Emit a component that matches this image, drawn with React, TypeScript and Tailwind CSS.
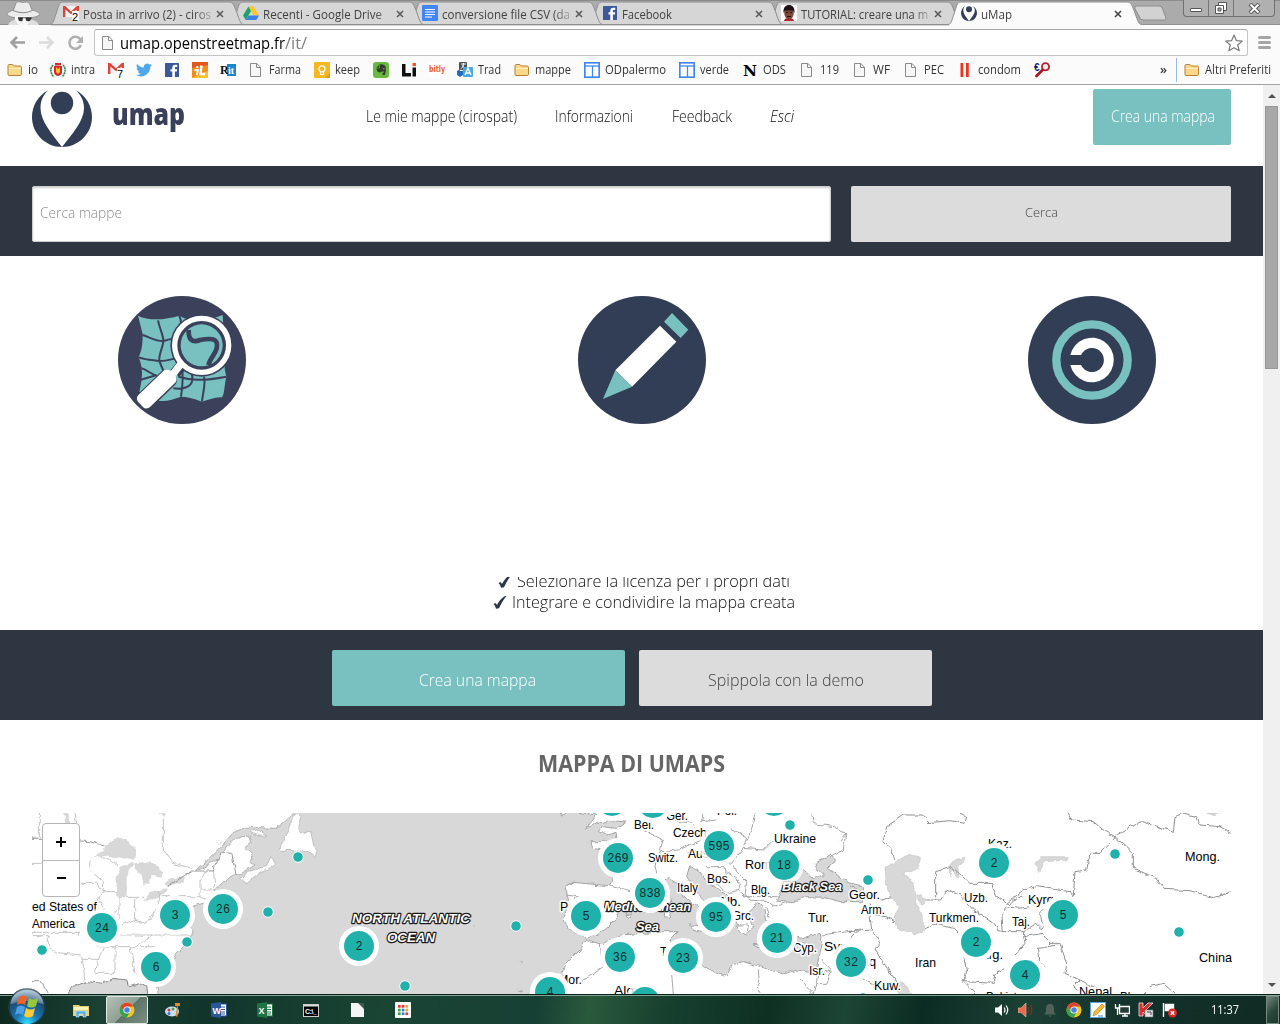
import React, { useLayoutEffect, useRef, useState } from "react";

/* Text squeezed or stretched horizontally to a given width. */
function Fit({ w, className = "", children }: { w: number; className?: string; children: React.ReactNode }) {
  const ref = useRef<HTMLSpanElement>(null);
  const [scale, setScale] = useState(1);
  useLayoutEffect(() => {
    const el = ref.current;
    if (el && el.offsetWidth) setScale(w / el.getBoundingClientRect().width * scale);
  }, [w]);
  return (
    <span className={"inline-block whitespace-nowrap text-left " + className} style={{ width: w }}>
      <span ref={ref} className="inline-block origin-left" style={{ transform: `scaleX(${scale})` }}>
        {children}
      </span>
    </span>
  );
}

/* ---------- small icons ---------- */
const Svg = ({ children, s = 16, vb = "0 0 16 16" }: any) => (
  <svg width={s} height={s} viewBox={vb} className="block shrink-0">{children}</svg>
);
const Gmail = ({ n }: { n: string }) => (
  <Svg>
    <rect x="0" y="1" width="16" height="11" fill="#f4f4f4" />
    <path d="M0 12V1h2.200L8 6.400 13.800 1H16v11h-2.400V4.500L8 9.300 2.400 4.500V12z" fill="#db4437" />
    <rect x="9" y="6" width="7" height="10" fill="#fff" />
    <text x="9" y="15.500" fontSize="11" fontFamily="Liberation Sans" fill="#000">{n}</text>
  </Svg>
);
const Drive = () => (
  <Svg>
    <path d="M5.400 1.500h5.200L16 10.500h-5.300z" fill="#fbc62c" />
    <path d="M5.400 1.500L8 6 2.700 15 0 10.500z" fill="#1da462" />
    <path d="M5.300 10.500H16L13.400 15H2.700z" fill="#3f7fe8" />
  </Svg>
);
const Docs = () => (
  <Svg><rect width="16" height="16" rx="1" fill="#4285f4" /><path d="M3 4.500h10M3 7h10M3 9.500h10M3 12h7" stroke="#fff" strokeWidth="1.200" /></Svg>
);
const Fb = () => (
  <Svg><rect x="1" y="1" width="14" height="14" rx=".5" fill="#3b5998" /><path d="M8.300 15V9.500H6.500V7.200h1.800V5.700c0-1.900 1.100-2.900 2.900-2.900h2v2.300h-1.300c-.8 0-1 .4-1 1v1.100h2.300l-.3 2.300h-2V15z" fill="#fff" /></Svg>
);
const Face = () => (
  <Svg><rect width="16" height="16" fill="#fff" /><path d="M3 16c0-2 2-3 5-3s5 1 5 3z" fill="#b2262c" /><ellipse cx="8" cy="8" rx="4.800" ry="6.500" fill="#7d4638" /><path d="M2.500 8C2 2 5 0 8 0s6 2 5.500 8L12 5.500H4z" fill="#1d1213" /><path d="M5 7.500h2M9 7.500h2M6 11.500h4" stroke="#2a1414" /></Svg>
);
const UMapLogo = ({ s = 16 }: { s?: number }) => (
  <svg width={s} height={s} viewBox="0 0 60 60" className="block shrink-0">
    <path d="M16 3.500C6 8.500 0 19 0 30c0 16.500 13.500 30 30 30C20 47 8.500 34 8.500 21 8.500 14 11 8 16 3.500zM44 3.500C54 8.500 60 19 60 30c0 16.500-13.500 30-30 30C40 47 52 34 52 21 52 14 49 8 44 3.500z" fill="#323e56" />
    <circle cx="30" cy="16" r="11.200" fill="#323e56" />
  </svg>
);
const Folder = () => (
  <Svg><path d="M1 4c0-1 .3-1.500 1.200-1.500h3.600L7.300 4H13c1 0 1.500.5 1.500 1.500V12c0 1-.5 1.500-1.500 1.500H2C1.300 13.500 1 13 1 12z" fill="#fbd888" stroke="#b67f3b" /><path d="M2 6h12v1H2z" fill="#fff0c0" /></Svg>
);
const Page = () => (
  <Svg><path d="M2.500 1.500h6.300l3.700 3.700v9.300h-10z" fill="#f7f7f7" stroke="#8a8a8a" /><path d="M8.500 1.500v4h4" fill="none" stroke="#8a8a8a" /></Svg>
);
const Crest = () => (
  <Svg><path d="M3 3C0 6 0 11 4 15M13 3c3 3 3 8-1 12" stroke="#3f8a50" strokeWidth="1.700" fill="none" strokeDasharray="2 .6" /><path d="M4 4h8v6q0 3-4 4-4-1-4-4z" fill="#d8262c" /><path d="M6 5l2 2 2-2v5l-2 2-2-2z" fill="#f0c531" /><path d="M5 1h6v2.500H5z" fill="#c93232" /></Svg>
);
const Twitter = () => (
  <Svg vb="0 0 24 24"><path d="M24 4.600a10 10 0 0 1-2.800.8 5 5 0 0 0 2.100-2.700 10 10 0 0 1-3.100 1.200 4.900 4.900 0 0 0-8.400 4.500A14 14 0 0 1 1.700 3.100a4.900 4.900 0 0 0 1.500 6.600 5 5 0 0 1-2.200-.6c0 2.400 1.700 4.400 3.900 4.900a5 5 0 0 1-2.200.1 4.900 4.900 0 0 0 4.600 3.400A10 10 0 0 1 0 19.500a14 14 0 0 0 7.500 2.200c9.100 0 14.300-7.700 14-14.600A10 10 0 0 0 24 4.600z" fill="#4ea7e8" /></Svg>
);
const BoxText = ({ bg, fg, t, size = 12, font = "Liberation Sans", w = 14, y = 12.500 }: any) => (
  <Svg><rect width="16" height="16" fill={bg} /><text x="1" y={y} fontSize={size} fontWeight="bold" fontFamily={font} fill={fg} textLength={w} lengthAdjust="spacingAndGlyphs">{t}</text></Svg>
);
const IL = () => (
  <Svg><rect width="16" height="16" fill="#f28c1e" /><path d="M0 16L16 9v7z" fill="#f9c22f" /><path d="M0 0h16v3L0 6z" fill="#e2571f" /><path d="M2.500 8h3.300l-.8 5M5.300 4v2" stroke="#fff" strokeWidth="2" fill="none" /><path d="M9.500 3.500L8.500 12H13" stroke="#fff" strokeWidth="2.400" fill="none" /></Svg>
);
const Rit = () => (
  <Svg><rect width="16" height="16" fill="#fff" /><rect x="7" y="2" width="9" height="12" fill="#1787c9" /><text x="0" y="12" fontSize="12" fontWeight="bold" fontFamily="Liberation Serif" fill="#111">R</text><text x="8" y="12" fontSize="10" fontWeight="bold" fontFamily="Liberation Serif" fill="#fff">it</text></Svg>
);
const Keep = () => (
  <Svg><rect width="16" height="16" rx="1" fill="#f4b823" /><path d="M11 16l5-5v5z" fill="#d99b16" /><circle cx="8" cy="6.800" r="3" fill="none" stroke="#fff" strokeWidth="1.300" /><path d="M6.500 10v2.500h3V10" fill="none" stroke="#fff" strokeWidth="1.200" /></Svg>
);
const Ever = () => (
  <Svg><rect width="16" height="16" rx="3" fill="#69b83f" /><path d="M3.500 5.500L6.500 2.500C9 2 11.500 2.500 12.500 4.500c.6 3 .3 6.500-.7 8.500H9.500v-2.200l1.500-.2-.1-1-2.900.1-.6.800C4.500 10.600 3.500 9 3.500 5.500z" fill="#343a30" /><path d="M3.500 6h3V3" stroke="#69b83f" strokeWidth=".7" fill="none" /><circle cx="10.700" cy="6.800" r=".8" fill="#69b83f" /></Svg>
);
const Li = () => (
  <Svg><path d="M1 2h3.500v9H10v3.500H1z" fill="#111" /><path d="M11.500 5.500H15v9h-3.500z" fill="#111" /><path d="M11.500 1H15v3.200h-3.500z" fill="#ef5a28" /></Svg>
);
const Bitly = () => (
  <Svg><rect width="16" height="16" fill="#fff" /><text x="0" y="10" fontSize="8" fontWeight="bold" fontFamily="DejaVu Sans" fill="#ee6123" textLength="16" lengthAdjust="spacingAndGlyphs">bitly</text></Svg>
);
const Trad = () => (
  <Svg><rect x="2" y="0" width="8" height="8" rx="1" fill="#4a5157" /><path d="M4 2h5M6.500 1v1.500C6 5 5 6 3.500 7M5 3.500L9 7" stroke="#fff" fill="none" /><rect x="6" y="5" width="10" height="10" rx="1" fill="#4aa8dc" /><path d="M8 13l3-7 3 7M9 11h4" stroke="#fff" strokeWidth="1.300" fill="none" /><path d="M0 9l3-2v2h3v4l-3 2-3-2z" fill="#1c6fbf" /></Svg>
);
const TIcon = () => (
  <Svg><rect x=".8" y=".8" width="14.400" height="14.400" fill="#fff" stroke="#4285f4" strokeWidth="1.700" /><path d="M1 4h14" stroke="#4285f4" strokeWidth="1.300" /><path d="M8.500 4v11" stroke="#4285f4" strokeWidth="1.300" /></Svg>
);
const Bars = () => <Svg><path d="M3.500 1h2.800v14H3.500zM9 1h2.800v14H9z" fill="#ea3323" /></Svg>;
const EuroLens = () => (
  <Svg><rect y="1" width="16" height="15" fill="#fff" /><text x="0" y="9" fontSize="10" fontWeight="bold" fontFamily="Liberation Sans" fill="#171a6d">€</text><circle cx="11.500" cy="4.800" r="3.600" fill="#eee" stroke="#b5202c" strokeWidth="1.800" /><path d="M8.500 8l-6 6" stroke="#a11d28" strokeWidth="2.800" strokeLinecap="round" /></Svg>
);
const Chrome = () => (
  <Svg><circle cx="8" cy="8" r="7.500" fill="#f5c51c" /><path d="M1.500 4.300A7.500 7.500 0 0 1 14.500 4.500H8L5 10z" fill="#dc4132" /><path d="M1.500 4.300A7.500 7.500 0 0 0 7.700 15.500L11 10H5z" fill="#34a350" /><circle cx="8" cy="8" r="3.600" fill="#fff" /><circle cx="8" cy="8" r="2.800" fill="#4583ec" /></Svg>
);

/* ---------- browser chrome ---------- */
const CloseX = ({ dark }: { dark?: boolean }) => (
  <svg width="8" height="8" viewBox="0 0 8 8" className="block shrink-0"><path d="M1 1l6 6M7 1L1 7" stroke={dark ? "#444" : "#5a5a5a"} strokeWidth="1.600" /></svg>
);
const TABS = [
  { icon: <Gmail n="2" />, t: "Posta in arrivo (2) - ciros", w: 128, z: "z-[6]" },
  { icon: <Drive />, t: "Recenti - Google Drive", w: 119, z: "z-[5]" },
  { icon: <Docs />, t: "conversione file CSV (da", w: 128, z: "z-[4]" },
  { icon: <Fb />, t: "Facebook", w: 50, z: "z-[3]" },
  { icon: <Face />, t: "TUTORIAL: creare una m", w: 127, z: "z-[2]" },
  { icon: <UMapLogo />, t: "uMap", w: 31, z: "z-[7]", active: true },
];

function TabStrip() {
  return (
    <div className="relative flex h-[25px] border-t border-[#8c8c8c] bg-[#ababab] shadow-[inset_0_-1px_0_#909090]">
      <svg width="51" height="24" viewBox="0 0 51 24" className="shrink-0">
        <path d="M8 24c1-3 5-5 9-6h13c4 1 8 3 9 6z" fill="#dedede" />
        <path d="M13.500 9L16 2c1.500-2 4-1 6.500-.5C25 1 28 .5 29.500 2.500L32 9c4 1 8 3 8 4.500-3 2.500-7 3-9 3H15c-3 0-6-1-8-3 0-1.500 3-3.500 6.500-4.500z" fill="#ebebeb" stroke="#858585" strokeWidth=".8" />
        <path d="M13 9.500q10 4.500 19.500 0" stroke="#888" fill="none" />
        <path d="M15 15h16v4l-4 5h-8l-4-5z" fill="#f7f7f7" /><path d="M18 16.500h5l-.5 3.500q-3 1-4-1zM25.500 16.500h6.500l-2 3.500q-3 .5-4-.5z" fill="#333" />
        <path d="M18 16.700h13" stroke="#333" strokeWidth=".8" />
      </svg>
      {TABS.map((t) => (
        <div key={t.t} className={"relative h-6 w-[179.600px] shrink-0 " + t.z}>
          <svg width="198" height="25" viewBox="0 0 198 25" className="absolute left-0 top-0">
            <path d="M-1 23.500C2 23.500 2.500 20 5 13 8 4 8 1 12 1H178c4 0 5 3 8 11 3 9 4 11.500 7 11.500v2H-1z" fill={t.active ? "#fbfbfb" : "#d6d6d6"} />
            <path d="M-1 23.500C2 23.500 2.500 20 5 13 8 4 8 1 12 1H178c4 0 5 3 8 11 3 9 4 11.500 7 11.500" fill="none" stroke="#8e8e8e" />
            {!t.active && <path d="M-2 23.500H193" stroke="#919191" />}
          </svg>
          <div className="relative flex h-6 items-center pl-3">
            {t.icon}
            <div className="ml-1 w-[129px] overflow-hidden [mask-image:linear-gradient(to_right,#000_86%,rgba(0,0,0,0.250))]">
              <Fit w={t.w} className="text-[12px] text-[#404040]">{t.t}</Fit>
            </div>
            <div className="ml-[4px] pt-px"><CloseX dark={t.active} /></div>
          </div>
        </div>
      ))}
      <svg width="34" height="20" viewBox="0 0 34 20" className="ml-[5px] mt-px shrink-0"><path d="M1 4h23c3 0 4 1 5 4l3 8c0 2-1 2-2 2H10c-3 0-4-1-5-4L1 7z" fill="#d2d2d2" stroke="#8d8d8d" /></svg>
      <div className="absolute right-[5px] top-[-1px] z-10 flex h-[17px] w-[92px] overflow-hidden rounded-b-[4px] border border-t-0 border-[#707070] bg-[#b0b0b0]">
        <div className="flex w-[25px] items-center justify-center border-r border-[#777] pt-1"><span className="block h-[4px] w-[12px] rounded-[1px] border border-[#555] bg-white" /></div>
        <div className="flex w-[25px] items-center justify-center border-r border-[#777]">
          <svg width="14" height="14" viewBox="0 0 14 14"><path d="M4.500 1.500h8v8h-8z" fill="#fff" stroke="#555" /><path d="M1.500 4.500h8v8h-8z" fill="#fff" stroke="#555" /><path d="M4 7h3v3H4z" fill="#aaa" stroke="#555" /></svg>
        </div>
        <div className="flex flex-1 items-center justify-center">
          <svg width="13" height="11" viewBox="0 0 13 11"><path d="M2 1l9 9M11 1l-9 9" stroke="#555" strokeWidth="4" /><path d="M2.500 1.500l8 8M10.500 1.500l-8 8" stroke="#fff" strokeWidth="2" /></svg>
        </div>
      </div>
    </div>
  );
}

function Toolbar() {
  return (
    <div className="flex h-[31px] items-center bg-[#fbfbfb] pt-[4px]">
      <svg width="94" height="24" viewBox="0 0 94 24" className="shrink-0" fill="none" strokeWidth="2.600">
        <path d="M25 11.500H12M17 6L11.500 11.500l5.500 5.500" stroke="#a0a0a0" />
        <path d="M39 11.500h13M47 6l5.500 5.500-5.500 5.500" stroke="#dcdcdc" />
        <path d="M80.500 8.500A6 6 0 1 0 81 14" stroke="#b0b0b0" />
        <path d="M83 5v7h-7z" fill="#b0b0b0" />
      </svg>
      <div className="flex h-[27px] w-[1154px] items-center rounded-[3px] border border-[#c4c4c4] border-t-[#a6a6a6] bg-white pl-[5px] pr-[3px]">
        <Page />
        <div className="ml-[4px] flex text-[16px] leading-[24px]">
          <Fit w={165} className="text-black">umap.openstreetmap.fr</Fit>
          <Fit w={22} className="text-[#808080]">/it/</Fit>
        </div>
        <svg width="20" height="20" viewBox="0 0 20 20" className="ml-auto"><path d="M10 2l2.300 5.600 6 .5-4.600 3.900 1.500 5.800L10 14.700 4.800 17.800 6.300 12 1.700 8.100l6-.5z" fill="#fff" stroke="#7b7b7b" strokeWidth="1.200" strokeLinejoin="round" /></svg>
      </div>
      <div className="ml-[10px] flex w-[13px] flex-col gap-[2px]">
        <span className="h-[3px] rounded bg-[#a5a5a5]" /><span className="h-[3px] rounded bg-[#a5a5a5]" /><span className="h-[3px] rounded bg-[#a5a5a5]" />
      </div>
    </div>
  );
}

const MARKS: { x: number; icon: React.ReactNode; t?: string; w?: number }[] = [
  { x: 7, icon: <Folder />, t: "io", w: 10 },
  { x: 50, icon: <Crest />, t: "intra", w: 24 },
  { x: 108, icon: <Gmail n="7" /> },
  { x: 136, icon: <Twitter /> },
  { x: 164, icon: <Fb /> },
  { x: 192, icon: <IL /> },
  { x: 220, icon: <Rit /> },
  { x: 248, icon: <Page />, t: "Farma", w: 32 },
  { x: 314, icon: <Keep />, t: "keep", w: 25 },
  { x: 373, icon: <Ever /> },
  { x: 401, icon: <Li /> },
  { x: 429, icon: <Bitly /> },
  { x: 457, icon: <Trad />, t: "Trad", w: 23 },
  { x: 514, icon: <Folder />, t: "mappe", w: 36 },
  { x: 584, icon: <TIcon />, t: "ODpalermo", w: 61 },
  { x: 679, icon: <TIcon />, t: "verde", w: 29 },
  { x: 742, icon: <BoxText bg="#fff" fg="#000" t="N" size={15} font="DejaVu Serif" w={14} y={13.500} />, t: "ODS", w: 23 },
  { x: 799, icon: <Page />, t: "119", w: 19 },
  { x: 852, icon: <Page />, t: "WF", w: 17 },
  { x: 903, icon: <Page />, t: "PEC", w: 20 },
  { x: 957, icon: <Bars />, t: "condom", w: 43 },
  { x: 1034, icon: <EuroLens /> },
];

function Bookmarks() {
  return (
    <div className="flex h-[29px] items-center border-b border-[#a3a3a3] bg-[#fbfbfb] pl-[7px] text-[12px] text-[#333]">
      {MARKS.map((m, i) => (
        <div key={m.x} className="flex shrink-0 items-center gap-[5px]" style={{ width: (MARKS[i + 1]?.x ?? 1160) - m.x }}>
          {m.icon}
          {m.t && <Fit w={m.w!}>{m.t}</Fit>}
        </div>
      ))}
      <Fit w={7} className="font-semibold">»</Fit>
      <div className="ml-[9px] mr-[7px] h-6 w-px bg-[#9db5e8]" />
      <Folder />
      <Fit w={66} className="ml-[5px]">Altri Preferiti</Fit>
    </div>
  );
}

/* ---------- page ---------- */
function Header() {
  return (
    <header className="flex h-[81px] items-start pl-8 pr-8">
      <div className="h-[62px] pt-[2px]"><UMapLogo s={60} /></div>
      <Fit w={73} className="ml-5 mt-[9px] text-[30px] font-extrabold leading-[40px] text-[#3a4059]">umap</Fit>
      <nav className="ml-[181px] mt-[18px] flex text-[17px] font-light leading-[25px] text-[#111]">
        <Fit w={151}>Le mie mappe (cirospat)</Fit>
        <Fit w={78} className="ml-[38px]">Informazioni</Fit>
        <Fit w={60} className="ml-[39px]">Feedback</Fit>
        <Fit w={24} className="ml-[38px] italic">Esci</Fit>
      </nav>
      <button className="ml-auto mt-[4px] h-14 w-[138px] rounded-[2px] bg-[#79c0c0] pb-[3px] pl-[2px] text-[17px] font-light text-white">
        <Fit w={104}>Crea una mappa</Fit>
      </button>
    </header>
  );
}

function Search() {
  return (
    <div className="flex h-[90px] gap-5 bg-[#2e3641] px-8 pt-5">
      <div className="h-14 w-[799px] rounded-[2px] border border-[#ccc] bg-white pl-[7px] pt-[14px] text-[14.500px] font-light leading-[23px] text-[#8c8c8c] shadow-[inset_0_1px_2px_#ccc]">
        <Fit w={82}>Cerca mappe</Fit>
      </div>
      <button className="h-14 w-[380px] rounded-[2px] bg-[#dcdcdc] pb-[2px] text-[13px] font-light text-[#444]">
        <Fit w={33}>Cerca</Fit>
      </button>
    </div>
  );
}

function Features() {
  return (
    <div className="flex h-[321px] pl-[118px] pt-10">
      <svg width="128" height="128" viewBox="54 48 384 384">
        <circle cx="246" cy="240" r="192" fill="#3b415a" />
        <path d="M114 107C150 125 200 118 238 107C270 128 330 122 368 105C372 150 366 200 376 240C370 265 378 280 379 290C372 320 374 340 366 352C345 350 325 360 306 365C280 355 260 350 243 350C220 358 200 365 175 362L118 335C130 290 128 260 116 232C126 210 128 190 128 162z" fill="#79c0c0" />
        <path d="M174 121C180 150 190 165 190 183C190 200 176 220 178 243M238 107C246 125 244 150 240 170M128 165C150 172 170 185 190 183C205 180 220 172 235 174M116 232C140 240 160 240 178 243C195 245 220 235 235 234M120 263C150 272 150 285 185 292M120 300L170 285M178 243L195 285M243 350C246 330 252 290 245 262M306 365C308 340 318 310 312 290M235 290C270 300 300 305 379 290M220 325C250 330 275 320 277 300C280 275 260 265 250 270" fill="none" stroke="#3b415a" strokeWidth="6" />
        <circle cx="305" cy="196" r="94" fill="#3b415a" />
        <path d="M255 245L225 280" stroke="#3b415a" strokeWidth="34" />
        <rect x="-65" y="-29" width="130" height="58" rx="18" transform="translate(171 327) rotate(-44)" fill="#3b415a" />
        <circle cx="305" cy="196" r="81" fill="#3b415a" stroke="#fff" strokeWidth="16" />
        <circle cx="305" cy="196" r="63" fill="#79c0c0" />
        <path d="M266 150C265 178 276 190 300 180C345 172 355 180 350 205C345 225 330 235 325 255" fill="none" stroke="#3b415a" strokeWidth="14" />
        <path d="M242 253L215 287" stroke="#fff" strokeWidth="22" />
        <rect x="-67" y="-25" width="134" height="50" rx="15" transform="translate(170 327) rotate(-44)" fill="#fff" />
      </svg>
      <svg width="128" height="128" viewBox="54 48 384 384" className="ml-[332px]">
        <circle cx="246" cy="240" r="192" fill="#323e56" />
        <path d="M300 137L349 185L216 320L166 271z" fill="#fff" />
        <path d="M166 271L216 320L129 357zM336 99L385 149L362 174L312 125z" fill="#79c0c0" />
      </svg>
      <svg width="128" height="128" viewBox="54 48 384 384" className="ml-[322px]">
        <circle cx="246" cy="240" r="192" fill="#323e56" />
        <circle cx="246" cy="240" r="107" fill="none" stroke="#79c0c0" strokeWidth="25" />
        <path d="M181 225A66 67 0 1 1 181 255H213A36 36 0 1 0 213 225z" fill="#fff" />
      </svg>
    </div>
  );
}

const Check = () => (
  <svg width="14" height="13" viewBox="0 0 14 13" className="mr-[5px] inline-block shrink-0"><path d="M.5 8c1.200-1.200 2.800-1 3.500 1C5.500 6 8.500 2 11.500.3L13.500 0C10.500 3.500 8 8 6 12.300L3 12.700C2.500 11 1.800 9 .5 8z" fill="#2d3547" /></svg>
);

function Steps() {
  return (
    <ul className="flex h-[53px] flex-col items-center overflow-hidden text-[16px] font-light leading-[21px] text-[#111]">
      <li className="ml-[24px] mt-[-6px] flex h-[21px] shrink-0 items-center"><Check /><Fit w={273}>Selezionare la licenza per i propri dati</Fit></li>
      <li className="ml-[24px] flex h-[21px] shrink-0 items-center"><Check /><Fit w={283}>Integrare e condividire la mappa creata</Fit></li>
    </ul>
  );
}

/* ---------- map ---------- */
const CLUSTERS: [number, number, string, number][] = [
  [102, 928, "24", 0.6], [175, 915, "3", 1], [223, 909, "26", 1], [359, 946, "2", 1], [156, 967, "6", 1],
  [618, 858, "269", 1], [719, 846, "595", 0.8], [784, 865, "18", 0.8], [650, 893, "838", 1], [586, 916, "5", 1],
  [716, 917, "95", 1], [777, 938, "21", 1], [620, 957, "36", 0.9], [683, 958, "23", 1], [550, 992, "4", 1],
  [645, 1002, "", 0.8], [851, 962, "32", 0.9], [612, 801, "", 1], [653, 803, "", 1], [774, 801, "", 0.8],
  [994, 863, "2", 1], [1063, 915, "5", 1], [976, 942, "2", 1], [1025, 975, "4", 1],
];
const DOTS: [number, number][] = [
  [298, 857], [268, 912], [187, 942], [42, 950], [405, 986], [516, 926], [790, 825], [868, 880], [1115, 854], [1179, 932], [863, 998],
];
const LABELS: [number, number, number, string][] = [
  [32, 911, 65, "ed States of"], [32, 928, 43, "America"],
  [634, 829, 20, "Bel."], [666, 820, 22, "Ger."], [673, 837, 37, "Czech."], [717, 815, 20, "Pol."],
  [648, 862, 30, "Switz."], [688, 858, 24, "Aus."], [707, 883, 24, "Bos."], [677, 892, 21, "Italy"],
  [774, 843, 42, "Ukraine"], [745, 869, 30, "Rom."], [751, 894, 19, "Blg."], [718, 906, 23, "Alb."], [732, 920, 22, "Grc."],
  [808, 922, 21, "Tur."], [793, 952, 24, "Cyp."], [824, 951, 24, "Syr."], [809, 975, 16, "Isr."], [560, 911, 26, "Port."],
  [558, 984, 24, "Mor."], [614, 995, 24, "Alg."], [660, 956, 24, "Tun."], [849, 899, 31, "Geor."], [861, 914, 24, "Arm."],
  [854, 966, 22, "Iraq"], [874, 990, 27, "Kuw."], [915, 967, 21, "Iran"], [964, 902, 24, "Uzb."], [929, 922, 50, "Turkmen."],
  [988, 848, 24, "Kaz."], [1028, 904, 29, "Kyrg."], [1012, 926, 18, "Taj."], [980, 959, 23, "Afg."], [1079, 996, 33, "Nepal"],
  [986, 1001, 34, "Pakist."], [1120, 1001, 24, "Bhu."], [1185, 861, 35, "Mong."], [1199, 962, 33, "China"],
];
const SEAS: [number, number, number, string][] = [
  [352, 923, 118, "NORTH ATLANTIC"], [387, 942, 48, "OCEAN"], [604, 911, 87, "Mediterranean"], [636, 931, 23, "Sea"], [782, 891, 60, "Black Sea"],
];

function WorldMap() {
  return (
    <div className="relative ml-8 h-[181px] w-[1200px] overflow-hidden bg-white">
      <svg width="1200" height="181" viewBox="32 813 1200 181" className="block" fontFamily="Liberation Sans">
        <defs>
          <filter id="rough" x="0" y="0" width="100%" height="100%" filterUnits="objectBoundingBox">
            <feTurbulence type="fractalNoise" baseFrequency="0.14" numOctaves="2" seed="7" />
            <feDisplacementMap in="SourceGraphic" scale="5" xChannelSelector="R" yChannelSelector="G" />
          </filter>
        </defs>
        <g filter="url(#rough)" strokeLinejoin="round">
          <rect x="0" y="780" width="1300" height="260" fill="#fff" />
          <g transform="translate(0 800) scale(.33333)">
            <path d="M1300 20H900L860 60L830 85L740 82L705 95L670 135L630 175L583 212L610 205L655 175L690 130L710 112L748 108L752 125L735 143L760 165L750 185L765 195L725 220L700 225L680 240L650 262L640 280L610 310L580 318L585 340L565 370L578 400L560 430L530 460L510 510L500 540L470 560L478 600H1300z" fill="#d8d8d8" stroke="#b0b0b0" strokeWidth="3" />
            <path d="M878 50L892 40L903 50L893 80L905 102L932 92L940 135L952 150L945 172L925 155L838 150L850 122L868 90zM750 95L770 90L800 108L775 108zM722 236L740 215L800 200L812 170L828 190L790 215L740 250z" fill="#fff" stroke="#aaa" strokeWidth="2" />
            <path d="M445 600L440 560L425 550L385 560L380 540L340 535L310 550L260 545L220 560L190 600z" fill="#d8d8d8" stroke="#888" strokeWidth="3" />
            <path d="M275 175L320 140L345 115L380 120L410 150L405 180L370 172L345 178L320 165zM352 290L350 230L365 195L405 190L380 220L380 290zM405 190L430 185L460 190L490 215L485 230L455 225L450 250L430 255L425 225L400 205zM430 300L450 275L500 265L505 272L465 298zM490 250L510 235L555 232L550 245L505 258zM190 39H205L208 70L196 70zM480 39H505L490 55z" fill="#d8d8d8" />
            <g fill="none" stroke="#c4c4c4" strokeWidth="3">
              <path d="M118 39V110L95 113M95 190H125M225 39L230 70M240 250H290L312 280M305 275H350M300 170Q340 180 355 200M270 180L268 210L310 245V275L295 300L312 330M357 292V350L345 372M357 292H430M404 292V360M480 290H600M475 270V320L440 370L400 360L365 375M310 405H580M350 330L310 395L290 440H470M345 440V520M390 440L405 520M345 520H285L295 480L310 440M245 478H295M95 397H240M95 407H145V440L170 458L245 465L250 500L255 545M235 407L237 395M620 215L600 240V290L640 310M600 270H650M640 210L645 265M490 50V150L520 190L580 205M585 212L650 180M655 135L665 125M410 438L460 405" />
              <path d="M240 123L270 125L320 140M500 260L550 230L575 213H640L650 180L670 158L695 160L708 222M95 115H125M95 545L125 545L148 585" stroke="#999" />
            </g>
          </g>
          <g transform="translate(430 800) scale(.33333)" stroke="#a5a5a5" strokeWidth="3">
            <path d="M-20 20H385L395 45L430 35L500 45L485 65L467 86L500 70L540 62L590 66L560 85L515 80L505 95L530 105L558 97L562 118L515 125L483 125L488 145L520 150L545 190L547 235L535 257L430 247L408 260L415 300L410 330L400 360L410 385L450 400L465 415L500 405L530 385L560 355L558 340L590 315L625 290L640 270L695 270L700 245L715 235L740 250L750 280L790 310L830 335L850 355L838 382L860 360L870 350L830 310L800 280L770 225L780 200L800 205L820 235L870 270L900 300L910 330L925 370L950 400L972 380L950 340L985 310L1005 330L1010 360L1015 390L1080 400L1110 415L1170 400L1177 430L1165 480L1155 520L1100 510L1060 522L990 500L940 485L905 495L890 530L860 520L820 500L800 480L740 450L720 420L745 395L700 395L640 400L570 405L510 435L465 420L450 450L410 490L395 520L400 540L350 600H-20z" fill="#d8d8d8" />
            <path d="M-60 0H30V620H-60z" fill="#d8d8d8" stroke="none" />
            <path d="M1040 300L1050 275L1080 240L1110 200L1135 222L1150 235L1180 225L1160 205L1155 190L1200 165L1217 180L1190 205L1210 215L1240 240L1300 260V305L1230 305L1180 292L1130 290L1090 305z" fill="#d8d8d8" />
            <path d="M705 325L722 330L718 352L703 350zM715 285L725 295L718 320L708 305zM775 375L845 378L825 400L790 390zM920 378L955 378L950 405L930 395zM970 430L1010 435L990 442zM1095 425L1140 432L1115 442zM590 345L605 340L600 352z" fill="#fff" />
            <g fill="none">
              <path d="M430 247L412 260M408 285L445 290M530 255L600 275M640 90L700 120L690 155L745 150L815 120L790 70L720 60M690 155L675 195L680 220M770 155L830 150M830 200H885L890 235M830 225L860 250L890 280L930 270L925 240L890 215M860 60L815 65L820 39M900 90L950 110L940 145L905 190L920 215L950 245L945 290H1040M940 145L1000 150L1030 120M905 190L870 185M975 39L965 90L950 120M1145 39L1150 70L1210 80L1247 100L1240 150L1205 170M925 270L960 300L1010 305L1030 320L1070 305M1010 320L1020 350M440 290L415 340M720 420L725 520L730 582M720 490L740 455M510 430L520 500L455 545M985 505L990 582M1110 540L1150 582L1165 520L1205 510L1190 550L1160 550M1175 405L1290 390M1205 510L1175 480M1247 100L1230 120" />
            </g>
            <path d="M255 565l8 5M265 578l12-5M130 380l3 2M265 485l10 2" fill="none" />
          </g>
          <g transform="translate(850 800) scale(.33333)" fill="none" stroke="#8f8f8f" strokeWidth="3">
            <path d="M105 205L150 178L175 163L208 170L205 208L165 215L160 225L185 240L195 270L200 310L220 350V395L190 403L145 390L135 355L145 320L110 270zM200 285L215 280L232 300L215 315L205 305zM295 200L312 180L345 172L340 188L325 195V235L315 225L310 200L300 230zM555 190L575 170H652L650 180L590 185L575 195L567 215zM1070 39H1112L1095 48zM130 540L160 545L185 585H145z" fill="#d8d8d8" stroke="#bbb" strokeWidth="1.500" />
            <path d="M135 178L125 150L98 125L110 80L160 45L215 45L235 68L300 62L345 70L350 50L330 39M257 300V215L305 200L360 250L425 250L440 290L470 310L520 270L560 260L660 275L670 285L675 215L710 210L720 160L750 160L795 110L840 80L875 65L970 95L975 50L1000 39L1040 50L1050 75L1110 80L1145 100M655 39L665 60L730 65L760 90L795 110L850 160V205L920 235L945 268L1020 272L1090 293L1145 275M232 300H272L290 270L330 285L370 330L430 370L440 390L460 395L455 340L490 300L515 285M460 395L520 395L560 370L575 385H580L570 340L600 310M470 320L505 325L540 320M222 390L250 370L310 385L335 410M520 395L525 430L495 465M520 410L580 400L600 430L630 430L650 490L645 520L690 540M340 465L350 515L340 545L430 550L435 520L465 505M340 545L375 582M565 445L625 435M565 445L570 485L585 500M690 540L670 560L700 580L780 582M690 540L750 570M880 582L900 560L940 550L975 582M0 258L60 290L95 300L125 290M60 310L75 345L105 350L135 365M60 345L65 390L90 430L75 450L115 510L140 545M0 395L65 390M0 420L20 395M35 535L70 555" />
          </g>
        </g>
        <g fontSize="13" fill="#000" stroke="#fff" strokeWidth="3" paintOrder="stroke" strokeLinejoin="round">
          {LABELS.map(([x, y, w, t]) => <text key={t} x={x} y={y} textLength={w} lengthAdjust="spacingAndGlyphs">{t}</text>)}
        </g>
        <g fontSize="13.500" fontStyle="italic" fontWeight="bold" fill="#fff" stroke="#1a1a1a" strokeWidth="2.400" paintOrder="stroke" strokeLinejoin="round">
          {SEAS.map(([x, y, w, t]) => <text key={t} x={x} y={y} textLength={w} lengthAdjust="spacingAndGlyphs">{t}</text>)}
        </g>
        {DOTS.map(([x, y]) => <circle key={x} cx={x} cy={y} r="5.300" fill="#20b2aa" stroke="#fff" />)}
        {CLUSTERS.map(([x, y, , o]) => <circle key={x + "h" + y} cx={x} cy={y} r="20" fill="#fff" opacity={o} />)}
        {CLUSTERS.map(([x, y, t]) => (
          <g key={x + "c" + y}>
            <circle cx={x} cy={y} r="15" fill="#20b2aa" />
            <text x={x + 0.200} y={y + 4} fontSize="12" textAnchor="middle" fill="#10302e" letterSpacing=".4">{t}</text>
          </g>
        ))}
      </svg>
      <div className="absolute left-[10px] top-[10px] flex h-[74px] w-[38px] flex-col rounded-[4px] border border-[#b5b5b5] bg-white">
        <div className="flex flex-1 items-center justify-center border-b border-[#bbb]"><svg width="10" height="10" viewBox="0 0 10 10"><path d="M5 0v10M0 5h10" stroke="#000" strokeWidth="2" /></svg></div>
        <div className="flex flex-1 items-center justify-center"><span className="block h-[2px] w-[9px] bg-black" /></div>
      </div>
    </div>
  );
}

/* ---------- taskbar ---------- */
const Office = ({ c, t }: { c: string; t: string }) => (
  <Svg><rect x="8" y="2" width="7.500" height="12" fill="#fff" stroke={c} /><path d="M10 5h4M10 7.500h4M10 10h4M10 12h4" stroke={c} /><path d="M0 1.500L10 0v16L0 14.500z" fill={c} /><text x="1.500" y="11.500" fontSize="9" fontWeight="bold" fontFamily="Liberation Sans" fill="#fff">{t}</text></Svg>
);
function Taskbar() {
  return (
    <footer className="relative flex h-[30px] items-center border-t border-[#0c1f19] bg-[linear-gradient(100deg,#0d2a20_0%,#1c4034_8%,#12352b_16%,#1a4434_30%,#174034_42%,#2a5a3c_46%,#17402f_52%,#0e3023_60%,#1d4535_66%,#0b2c22_72%,#1d4035_80%,#12302a_90%,#102b23_100%)] pr-[1px] shadow-[inset_0_1px_0_#7fa394]">
      <svg width="38" height="38" viewBox="0 0 38 38" className="absolute left-2 top-[-7px]">
        <defs>
          <radialGradient id="orb" cx=".5" cy=".95" r=".9"><stop offset="0" stopColor="#2fe0ff" /><stop offset=".35" stopColor="#1b78b5" /><stop offset=".75" stopColor="#1e4a72" /><stop offset="1" stopColor="#8fb2c9" /></radialGradient>
        </defs>
        <circle cx="19" cy="19" r="18" fill="url(#orb)" stroke="#1b3a46" strokeWidth="1.500" />
        <path d="M3 16a16 16 0 0 1 32 0Q19 10 3 16z" fill="#fff" opacity=".3" />
        <path d="M11 9q4-3 8 0l-2 8q-4-3-8 0z" fill="#f0622a" /><path d="M21 10q4 3 9 0l-2 8q-5 3-9 0z" fill="#96c83c" /><path d="M9 19q4-3 8 0l-2 8q-4-3-8 0z" fill="#4f9fe6" /><path d="M18 20q5 3 9 0l-2 8q-5 3-9 0z" fill="#fbca3b" />
      </svg>
      <div className="ml-[73px]"><Svg><path d="M0 3h6l1 1h9v10H0z" fill="#e9cf74" /><path d="M1 5h14v3H1z" fill="#fff2b8" /><path d="M3 15V9h10v6h-3v-3H6v3z" fill="#55b4e6" stroke="#cfeaff" strokeWidth=".6" /></Svg></div>
      <div className="ml-[17px] flex h-[28px] w-[42px] items-center justify-center rounded-[2px] border border-[#dfe8e2] bg-[linear-gradient(135deg,#b5c1b8_0%,#8d9f93_50%,#5d7366_51%,#7a9083_100%)]"><Chrome /></div>
      <div className="ml-[17px]"><Svg><ellipse cx="7" cy="9.500" rx="7" ry="5" fill="#c9dfef" /><circle cx="4" cy="8" r="1.500" fill="#d33" /><circle cx="8" cy="7" r="1.500" fill="#48a348" /><circle cx="4" cy="11.500" r="1.500" fill="#3977d0" /><path d="M10 1h5v3h-2l-.5 11-2-1L12 4h-2z" fill="#e08a2c" /></Svg></div>
      <div className="ml-[30px]"><Office c="#2b579a" t="W" /></div>
      <div className="ml-[30px]"><Office c="#1f7244" t="X" /></div>
      <div className="ml-[30px]"><Svg><rect x=".5" y="2.500" width="15" height="12" fill="#000" stroke="#ccc" /><path d="M1 3h14v1.500H1z" fill="#ddd" /><text x="2" y="12" fontSize="7" fontWeight="bold" fontFamily="Liberation Sans" fill="#fff" textLength="12">C:\_</text></Svg></div>
      <div className="ml-[30px]"><Svg><path d="M2 1h8l5 5v9H2z" fill="#f5f5f5" /><path d="M9 1h6v6z" fill="#4c5650" /></Svg></div>
      <div className="ml-[30px]">
        <Svg><rect width="16" height="16" rx="1" fill="#fff" />
          {["#e53935", "#e53935", "#f6a821", "#3fa34d", "#3a77d8", "#f6a821", "#3fa34d", "#3a77d8", "#e53935"].map((c, i) => <rect key={i} x={3 + (i % 3) * 3.700} y={3 + Math.floor(i / 3) * 3.700} width="2.700" height="2.700" fill={c} />)}
        </Svg>
      </div>
      <div className="ml-auto flex items-center gap-2">
        <Svg><path d="M1 5.500h3L8 2v12l-4-3.500H1z" fill="#fff" /><path d="M10 5.500q2 2.500 0 5M12 3.500q3.500 4.500 0 9" stroke="#fff" fill="none" strokeWidth="1.200" /></Svg>
        <Svg><path d="M0 6h3l5-5v14L3 10.500H0z" fill="#e8694c" stroke="#ffd0c0" strokeWidth=".5" /><path d="M10 5q2 3 0 6M12.500 3q3 5 0 10" stroke="#8a3324" fill="none" /></Svg>
        <Svg><path d="M8 2c3 0 4 2 4 5v3l2 2.500H2L4 10V7c0-3 1-5 4-5zM6 13.500h4L8 15z" fill="#52625b" /></Svg>
        <Chrome />
        <Svg><rect width="16" height="16" rx="1" fill="#fff" stroke="#5ca7e0" strokeWidth="2" /><path d="M3 14l1-4 8-8 2.500 2.500-8 8z" fill="#f5b92c" stroke="#b5781b" strokeWidth=".6" /><path d="M8 14h5" stroke="#4d8fd6" /></Svg>
        <Svg><path d="M5.500 4.500h10v7h-10zM8 14h6M11 11.500V14" fill="#263a35" stroke="#fff" strokeWidth="1.400" /><path d="M1.500 2v4h4V2M3.500 6v7" stroke="#fff" fill="none" strokeWidth="1.300" /></Svg>
        <Svg><path d="M1 1h4v5l5-5h5L8 8l3 3-3 2-3-3v4H1z" fill="#d82b2b" stroke="#fff" strokeWidth=".7" /><rect x="7" y="8" width="8" height="7" fill="#e4e4e4" stroke="#777" strokeWidth=".6" /><path d="M9 10h4v3" stroke="#444" fill="none" /></Svg>
        <Svg><path d="M1.500 1v14M3.500 2.500h8v6h-8z" stroke="#fff" fill="#fff" strokeWidth="1.400" /><circle cx="10.500" cy="11" r="4.500" fill="#d92626" /><path d="M8.800 9.300l3.400 3.400M12.200 9.300l-3.400 3.400" stroke="#fff" strokeWidth="1.500" /></Svg>
      </div>
      <Fit w={28} className="ml-[33px] text-[12px] text-white">11:37</Fit>
      <div className="ml-[27px] h-[28px] w-[13px] border border-[#76897f] bg-[linear-gradient(135deg,#72857b,#2c463c_55%,#1c372d)]" />
    </footer>
  );
}

export default function App() {
  return (
    <div className="h-[1024px] w-[1280px] overflow-hidden bg-white font-['Open_Sans',sans-serif]">
      <TabStrip />
      <Toolbar />
      <Bookmarks />
      <div className="flex h-[909px]">
        <main className="w-[1263px] shrink-0 overflow-hidden">
          <Header />
          <Search />
          <Features />
          <Steps />
          <div className="flex h-[90px] justify-center gap-[14px] bg-[#2e3641] pt-5 text-[16.500px] font-light">
            <button className="h-14 w-[293px] rounded-[2px] bg-[#79c0c0] pr-[2px] pt-[4px] text-white"><Fit w={117}>Crea una mappa</Fit></button>
            <button className="h-14 w-[293px] rounded-[2px] bg-[#dcdcdc] pl-[2px] pt-[4px] text-[#444]"><Fit w={156}>Spippola con la demo</Fit></button>
          </div>
          <h2 className="h-[93px] pt-[28px] text-center text-[22.500px] font-bold leading-[32px] text-[#666]"><Fit w={187}>MAPPA DI UMAPS</Fit></h2>
          <WorldMap />
        </main>
        <div className="flex w-[17px] flex-col items-center bg-[#f0f0f0]">
          <div className="flex h-[21px] items-center"><span className="border-x-4 border-b-4 border-x-transparent border-b-[#505050]" /></div>
          <div className="h-[263px] w-[13px] border border-[#979797] bg-[#a8a8a8]" />
          <div className="mt-auto flex h-[19px] items-center"><span className="border-x-4 border-t-4 border-x-transparent border-t-[#505050]" /></div>
        </div>
      </div>
      <Taskbar />
    </div>
  );
}
